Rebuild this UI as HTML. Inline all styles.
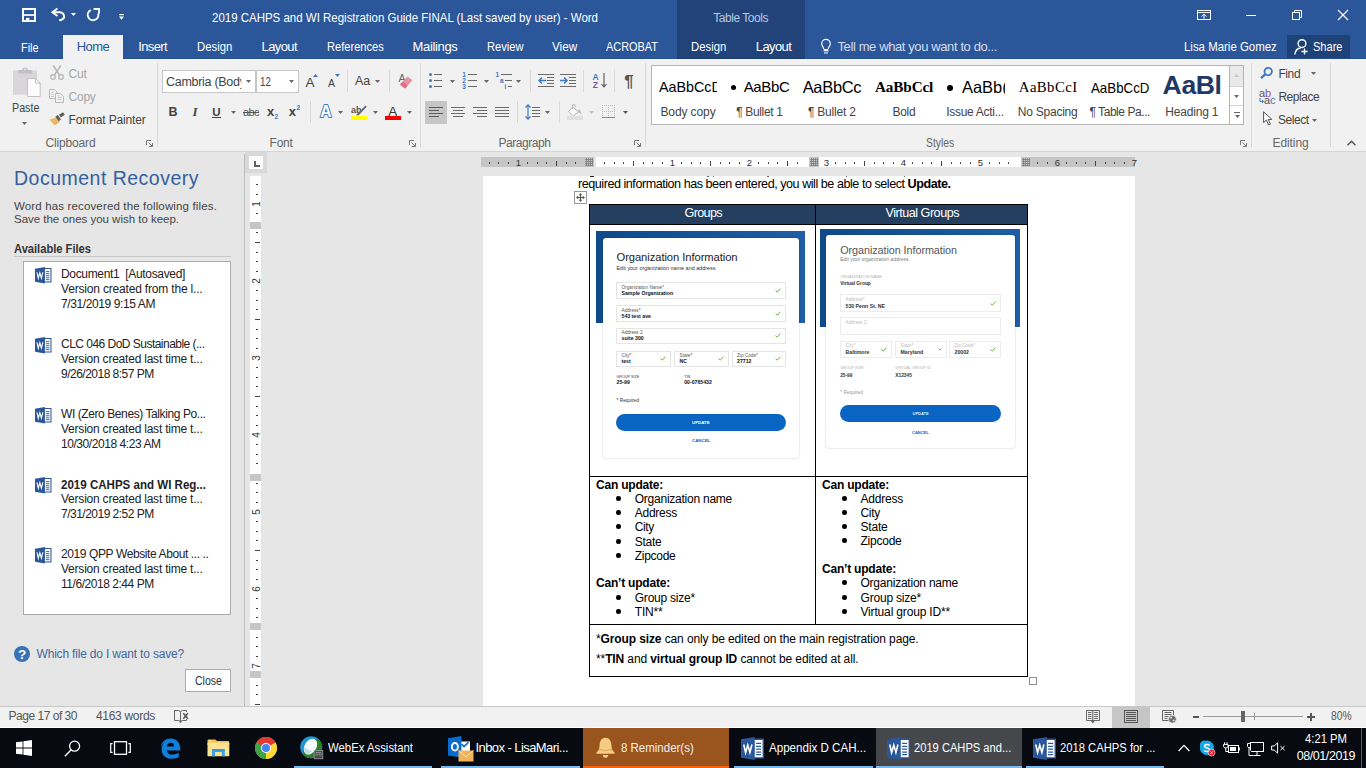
<!DOCTYPE html>
<html lang="en">
<head>
<meta charset="utf-8">
<title>2019 CAHPS and WI Registration Guide FINAL (Last saved by user) - Word</title>
<style>
*{box-sizing:border-box;margin:0;padding:0}
html,body{width:1366px;height:768px;overflow:hidden;background:#e6e6e6;font-family:"Liberation Sans",sans-serif;font-size:12px;color:#444}
.a{position:absolute;white-space:nowrap}
svg{overflow:visible}
</style>
</head>
<body>
<!-- s_title -->
<div class="a " style="left:0px;top:0px;width:1366px;height:59px;background:#2b579a;"></div>
<div class="a " style="left:677px;top:0px;width:128px;height:59px;background:#224379;"></div>
<div class="a " style="left:0px;top:58px;width:1366px;height:1px;background:#24508f;"></div>
<div class="a " style="left:677px;top:58px;width:128px;height:1px;background:#1d3c6e;"></div>
<div class="a " style="left:63px;top:35px;width:60px;height:25px;background:#f1f1f1;"></div>
<svg class="a" style="left:22px;top:8px;" width="14" height="14" viewBox="0 0 14 14"><rect x="1" y="1" width="12" height="12" fill="none" stroke="#fff" stroke-width="2"/><rect x="1" y="6.2" width="12" height="1.7" fill="#fff"/><rect x="4" y="9.9" width="3.4" height="3.9" fill="#fff"/></svg>
<svg class="a" style="left:51px;top:8px;" width="15" height="13" viewBox="0 0 15 13"><path d="M2 4.3H8.6C13.2 4.3 14.6 9.6 11.2 11.4C10.2 12 9.2 12.2 8.2 12.3" fill="none" stroke="#fff" stroke-width="1.9"/><path d="M6.4 0.6L1.4 4.3L6.4 8" fill="none" stroke="#fff" stroke-width="1.9"/></svg>
<svg class="a" style="left:71px;top:13px;" width="5" height="3" viewBox="0 0 5 3"><path d="M0 0H5L2.5 2.9Z" fill="#fff"/></svg>
<svg class="a" style="left:86px;top:8px;" width="14" height="13" viewBox="0 0 14 13"><path d="M4.8 2.1A5.3 5.3 0 1 0 12.2 5.6" fill="none" stroke="#fff" stroke-width="1.9"/><path d="M7.6 1H13V5.8" fill="none" stroke="#fff" stroke-width="1.8"/></svg>
<svg class="a" style="left:119px;top:14px;" width="5" height="6" viewBox="0 0 5 6"><rect x="0" y="0" width="5" height="1.2" fill="#fff"/><path d="M0 2.6H5L2.5 5.8Z" fill="#fff"/></svg>
<span class="a" id="t1" style="left:212.00px;top:11.00px;font-size:13px;line-height:13px;color:#fff;transform:scaleX(0.8830);transform-origin:0 0;">2019 CAHPS and WI Registration Guide FINAL (Last saved by user) - Word</span>
<span class="a" id="t2" style="left:713.25px;top:12.00px;font-size:12px;line-height:12px;color:#b9c7e0;letter-spacing:-0.462px;">Table Tools</span>
<svg class="a" style="left:1197px;top:10px;" width="14" height="10" viewBox="0 0 14 10"><rect x="0.5" y="0.5" width="13" height="9" fill="none" stroke="#fff" stroke-width="1"/><path d="M0.5 2.5H13.5" stroke="#fff" stroke-width="1"/><path d="M7 8.8V4.2M4.6 6.6L7 4.2L9.4 6.6" fill="none" stroke="#fff" stroke-width="1"/></svg>
<div class="a " style="left:1246px;top:15px;width:10px;height:1px;background:#fff;"></div>
<svg class="a" style="left:1292px;top:10px;" width="10" height="10" viewBox="0 0 10 10"><rect x="0.5" y="2.5" width="7" height="7" fill="none" stroke="#fff" stroke-width="1"/><path d="M2.5 2.5V0.5H9.5V7.5H7.5" fill="none" stroke="#fff" stroke-width="1"/></svg>
<svg class="a" style="left:1338px;top:10px;" width="10" height="10" viewBox="0 0 10 10"><path d="M0 0L10 10M10 0L0 10" stroke="#fff" stroke-width="1.1"/></svg>
<span class="a" id="t3" style="left:20.50px;top:41.00px;font-size:13px;line-height:13px;color:#fff;transform:scaleX(0.8352);transform-origin:0 0;">File</span>
<span class="a" id="t4" style="left:138.25px;top:40.00px;font-size:13px;line-height:13px;color:#fff;letter-spacing:-0.628px;">Insert</span>
<span class="a" id="t5" style="left:196.75px;top:40.00px;font-size:13px;line-height:13px;color:#fff;transform:scaleX(0.8710);transform-origin:0 0;">Design</span>
<span class="a" id="t6" style="left:261.50px;top:40.00px;font-size:13px;line-height:13px;color:#fff;letter-spacing:-0.591px;">Layout</span>
<span class="a" id="t7" style="left:326.50px;top:40.00px;font-size:13px;line-height:13px;color:#fff;transform:scaleX(0.8536);transform-origin:0 0;">References</span>
<span class="a" id="t8" style="left:412.50px;top:40.00px;font-size:13px;line-height:13px;color:#fff;letter-spacing:-0.336px;">Mailings</span>
<span class="a" id="t9" style="left:486.75px;top:40.00px;font-size:13px;line-height:13px;color:#fff;transform:scaleX(0.8563);transform-origin:0 0;">Review</span>
<span class="a" id="t10" style="left:552.00px;top:40.00px;font-size:13px;line-height:13px;color:#fff;transform:scaleX(0.9033);transform-origin:0 0;">View</span>
<span class="a" id="t11" style="left:606.25px;top:40.00px;font-size:13px;line-height:13px;color:#fff;transform:scaleX(0.8402);transform-origin:0 0;">ACROBAT</span>
<span class="a" id="t12" style="left:690.75px;top:40.00px;font-size:13px;line-height:13px;color:#fff;transform:scaleX(0.8710);transform-origin:0 0;">Design</span>
<span class="a" id="t13" style="left:755.75px;top:40.00px;font-size:13px;line-height:13px;color:#fff;letter-spacing:-0.591px;">Layout</span>
<span class="a" id="t14" style="left:76.75px;top:40.00px;font-size:13px;line-height:13px;color:#2b579a;letter-spacing:-0.547px;">Home</span>
<svg class="a" style="left:820.5px;top:38.6px;" width="10" height="15" viewBox="0 0 10 15"><path d="M2.7 10C2.7 8 0.7 7.2 0.7 4.7A4.3 4.3 0 0 1 9.3 4.7C9.3 7.2 7.3 8 7.3 10" fill="none" stroke="#eef2f9" stroke-width="1.25"/><rect x="2.6" y="10" width="4.8" height="2.3" fill="#eef2f9"/><rect x="3" y="13.4" width="4" height="1.1" fill="#eef2f9"/></svg>
<span class="a" id="t15" style="left:837.50px;top:40.00px;font-size:13px;line-height:13px;color:#d3ddef;letter-spacing:-0.392px;">Tell me what you want to do...</span>
<span class="a" id="t16" style="left:1184.00px;top:40.00px;font-size:13px;line-height:13px;color:#fff;transform:scaleX(0.8798);transform-origin:0 0;">Lisa Marie Gomez</span>
<div class="a " style="left:1287px;top:35px;width:63px;height:23px;background:#1e4278;"></div>
<svg class="a" style="left:1294px;top:39px;" width="15" height="17" viewBox="0 0 15 17"><circle cx="8" cy="4.6" r="3.9" fill="none" stroke="#fff" stroke-width="1.4"/><path d="M0.8 15.5C1.4 11 4 9.2 6.6 9" fill="none" stroke="#fff" stroke-width="1.4"/><path d="M10.5 9.5V15.5M7.5 12.5H13.5" stroke="#fff" stroke-width="1.3"/></svg>
<span class="a" id="t17" style="left:1313.00px;top:40.00px;font-size:13px;line-height:13px;color:#fff;transform:scaleX(0.8501);transform-origin:0 0;">Share</span>
<!-- s_ribbon -->
<div class="a " style="left:0px;top:59px;width:1366px;height:92px;background:#f1f1f1;"></div>
<div class="a " style="left:63px;top:58px;width:60px;height:2px;background:#f1f1f1;"></div>
<div class="a " style="left:0px;top:151px;width:1366px;height:1px;background:#d6d6d6;"></div>
<svg class="a" style="left:13px;top:67px;" width="28" height="30" viewBox="0 0 28 30"><rect x="0" y="3.4" width="24" height="24.4" fill="#d9d5db"/><path d="M5 6.6V4Q5 3 6 3H9.2V1.8Q12 -0.8 14.8 1.8V3H18Q19 3 19 4V6.6Z" fill="#c3bfc6"/><circle cx="12" cy="2.4" r="1.1" fill="#e4e1e6"/><path d="M14.5 11.5H22.5L27.2 16.2V29.5H14.5Z" fill="#fbfbfb" stroke="#c3c0c6" stroke-width="1"/><path d="M22.5 11.5V16.2H27.2" fill="none" stroke="#c3c0c6" stroke-width="1"/></svg>
<span class="a" id="t18" style="left:11.60px;top:102.00px;font-size:12px;line-height:12px;color:#444;transform:scaleX(0.8929);transform-origin:0 0;">Paste</span>
<svg class="a" style="left:22px;top:122px;" width="5" height="3" viewBox="0 0 5 3"><path d="M0 0H5L2.5 3Z" fill="#666"/></svg>
<svg class="a" style="left:50px;top:65px;" width="14" height="15" viewBox="0 0 14 15"><path d="M3.2 0.5L9.6 10.2M10.8 0.5L4.4 10.2" stroke="#b4b4b4" stroke-width="1.4" fill="none"/><circle cx="3" cy="12" r="2.3" fill="none" stroke="#b4b4b4" stroke-width="1.2"/><circle cx="11" cy="12" r="2.3" fill="none" stroke="#b4b4b4" stroke-width="1.2"/></svg>
<span class="a" id="t19" style="left:68.50px;top:68.00px;font-size:12px;line-height:12px;color:#a6a6a6;letter-spacing:-0.196px;">Cut</span>
<svg class="a" style="left:49px;top:89px;" width="15" height="14" viewBox="0 0 15 14"><path d="M0.5 0.5H5.5L8 3V9.5H0.5Z" fill="#f4f4f4" stroke="#b8b8b8"/><path d="M6.5 4.5H11.5L14.5 7.5V13.5H6.5Z" fill="#f4f4f4" stroke="#b8b8b8"/><path d="M2 3.5H4.5M2 5.5H5M2 7.5H5M8.5 8.5H12.5M8.5 10.5H12.5M8.5 6.8H10.5" stroke="#c2c2c2" stroke-width="0.9"/></svg>
<span class="a" id="t20" style="left:68.50px;top:91.00px;font-size:12px;line-height:12px;color:#a6a6a6;letter-spacing:-0.229px;">Copy</span>
<svg class="a" style="left:49px;top:112px;" width="16" height="14" viewBox="0 0 16 14"><path d="M0.5 7.8L7.2 5.2L10.6 10L5.6 13.4Z" fill="#eab765"/><path d="M6.4 4.6L8.8 2.9L12 7.6L9.6 9.2Z" fill="#5e5e5e"/><path d="M10 2.8L14 0.2L15.8 2.8L11.8 5.4Z" fill="#5e5e5e"/></svg>
<span class="a" id="t21" style="left:68.50px;top:114.00px;font-size:12px;line-height:12px;color:#444;letter-spacing:-0.161px;">Format Painter</span>
<span class="a" id="t22" style="left:45.60px;top:137.00px;font-size:12px;line-height:12px;color:#666;letter-spacing:-0.175px;">Clipboard</span>
<svg class="a" style="left:146px;top:140px;" width="7" height="7" viewBox="0 0 7 7"><path d="M0.5 5V0.5H5" fill="none" stroke="#777" stroke-width="1"/><path d="M2.6 2.6L6 6M6.5 3V6.5H3" fill="none" stroke="#777" stroke-width="1"/></svg>
<div class="a " style="left:157px;top:63px;width:1px;height:84px;background:#d8d8d8;"></div>
<div class="a " style="left:162px;top:70px;width:94px;height:23px;background:#fff;border:1px solid #c6c6c6;"></div>
<div class="a " style="left:256px;top:70px;width:43px;height:23px;background:#fff;border:1px solid #c6c6c6;"></div>
<span class="a" id="t23" style="left:166.00px;top:76.00px;font-size:12.5px;line-height:12.5px;color:#444;clip-path:inset(-2px 8.3px -4px 0);letter-spacing:-0.288px;">Cambria (Body)</span>
<svg class="a" style="left:246px;top:80px;" width="5" height="3" viewBox="0 0 5 3"><path d="M0 0H5L2.5 3Z" fill="#666"/></svg>
<span class="a" id="t24" style="left:259.75px;top:76.00px;font-size:12.5px;line-height:12.5px;color:#444;transform:scaleX(0.7802);transform-origin:0 0;">12</span>
<svg class="a" style="left:289px;top:80px;" width="5" height="3" viewBox="0 0 5 3"><path d="M0 0H5L2.5 3Z" fill="#666"/></svg>
<span class="a" id="t25" style="left:305.40px;top:76.00px;font-size:13.5px;line-height:13.5px;color:#444;">A</span>
<svg class="a" style="left:313px;top:74px;" width="5" height="3" viewBox="0 0 5 3"><path d="M0 3H5L2.5 0Z" fill="#3e78c3"/></svg>
<span class="a" id="t26" style="left:328.00px;top:78.00px;font-size:10.5px;line-height:10.5px;color:#444;">A</span>
<svg class="a" style="left:335px;top:74px;" width="5" height="3" viewBox="0 0 5 3"><path d="M0 0H5L2.5 3Z" fill="#3e78c3"/></svg>
<div class="a " style="left:347px;top:70px;width:1px;height:22px;background:#d8d8d8;"></div>
<span class="a" id="t27" style="left:355.00px;top:75.00px;font-size:12.5px;line-height:12.5px;color:#444;letter-spacing:-0.148px;">Aa</span>
<svg class="a" style="left:375px;top:80px;" width="5" height="3" viewBox="0 0 5 3"><path d="M0 0H5L2.5 3Z" fill="#666"/></svg>
<div class="a " style="left:389px;top:70px;width:1px;height:22px;background:#d8d8d8;"></div>
<span class="a" id="t28" style="left:398.50px;top:73.00px;font-size:10.5px;line-height:10.5px;color:#666;">A</span>
<svg class="a" style="left:399px;top:76px;" width="15" height="13" viewBox="0 0 15 13"><path d="M1 8.5L8.5 0.5L13.5 4.3L6 12.5Z" fill="#e8919f"/><path d="M1 8.5L3.5 5.8L8.6 9.7L6 12.5Z" fill="#df6d80"/></svg>
<span class="a" id="t29" style="left:168.50px;top:106.00px;font-size:12.5px;line-height:12.5px;color:#444;font-weight:bold;">B</span>
<span class="a" id="t30" style="left:192.50px;top:105.00px;font-size:13px;line-height:13px;color:#444;font-weight:bold;font-style:italic;font-family:'Liberation Serif',serif;">I</span>
<span class="a" id="t31" style="left:212.30px;top:107.00px;font-size:11.5px;line-height:11.5px;color:#444;font-weight:bold;">U</span>
<div class="a " style="left:212px;top:117px;width:9px;height:1px;background:#444;"></div>
<svg class="a" style="left:231px;top:111px;" width="5" height="3" viewBox="0 0 5 3"><path d="M0 0H5L2.5 3Z" fill="#666"/></svg>
<span class="a" id="t32" style="left:243.00px;top:107.00px;font-size:11px;line-height:11px;color:#555;text-decoration:line-through;letter-spacing:-0.583px;">abc</span>
<span class="a" id="t33" style="left:267.00px;top:105.00px;font-size:13px;line-height:13px;color:#444;font-weight:bold;">x</span>
<span class="a" id="t34" style="left:274.50px;top:114.00px;font-size:6.5px;line-height:6.5px;color:#3e78c3;font-weight:bold;">2</span>
<span class="a" id="t35" style="left:288.75px;top:105.00px;font-size:13px;line-height:13px;color:#444;font-weight:bold;">x</span>
<span class="a" id="t36" style="left:296.50px;top:105.00px;font-size:6.5px;line-height:6.5px;color:#3e78c3;font-weight:bold;">2</span>
<div class="a " style="left:310px;top:101px;width:1px;height:22px;background:#d8d8d8;"></div>
<svg class="a" style="left:319px;top:104px;" width="14" height="14" viewBox="0 0 14 14"><text x="7" y="12.8" font-size="15.6" font-weight="bold" font-family="Liberation Sans, sans-serif" text-anchor="middle" fill="#fff" stroke="#3e78c3" stroke-width="2" paint-order="stroke" stroke-linejoin="round">A</text></svg>
<svg class="a" style="left:338px;top:111px;" width="5" height="3" viewBox="0 0 5 3"><path d="M0 0H5L2.5 3Z" fill="#666"/></svg>
<span class="a" id="t37" style="left:351.00px;top:106.00px;font-size:9px;line-height:9px;color:#555;font-weight:bold;">ab</span>
<svg class="a" style="left:355px;top:105px;" width="12" height="11" viewBox="0 0 12 11"><path d="M1 10L10.5 0.5L11.8 1.8L3.5 10.5Z" fill="#6a6a6a"/></svg>
<div class="a " style="left:351px;top:116px;width:16px;height:4px;background:#ffff00;"></div>
<svg class="a" style="left:373px;top:111px;" width="5" height="3" viewBox="0 0 5 3"><path d="M0 0H5L2.5 3Z" fill="#666"/></svg>
<span class="a" id="t38" style="left:388.30px;top:105.00px;font-size:13.5px;line-height:13.5px;color:#3a3a3a;">A</span>
<div class="a " style="left:385px;top:116px;width:16px;height:4px;background:#ff0000;"></div>
<svg class="a" style="left:407px;top:111px;" width="5" height="3" viewBox="0 0 5 3"><path d="M0 0H5L2.5 3Z" fill="#666"/></svg>
<span class="a" id="t39" style="left:269.60px;top:137.00px;font-size:12px;line-height:12px;color:#666;letter-spacing:-0.279px;">Font</span>
<svg class="a" style="left:409px;top:140px;" width="7" height="7" viewBox="0 0 7 7"><path d="M0.5 5V0.5H5" fill="none" stroke="#777" stroke-width="1"/><path d="M2.6 2.6L6 6M6.5 3V6.5H3" fill="none" stroke="#777" stroke-width="1"/></svg>
<div class="a " style="left:420px;top:63px;width:1px;height:84px;background:#d8d8d8;"></div>
<div class="a " style="left:429px;top:73.0px;width:3px;height:3px;background:#3e78c3;border-radius:50%;"></div>
<div class="a " style="left:434px;top:74px;width:8px;height:1px;background:#6a6a6a;"></div>
<div class="a " style="left:429px;top:79.0px;width:3px;height:3px;background:#3e78c3;border-radius:50%;"></div>
<div class="a " style="left:434px;top:80px;width:8px;height:1px;background:#6a6a6a;"></div>
<div class="a " style="left:429px;top:85.0px;width:3px;height:3px;background:#3e78c3;border-radius:50%;"></div>
<div class="a " style="left:434px;top:86px;width:8px;height:1px;background:#6a6a6a;"></div>
<svg class="a" style="left:450px;top:80px;" width="5" height="3" viewBox="0 0 5 3"><path d="M0 0H5L2.5 3Z" fill="#666"/></svg>
<span class="a" id="t40" style="left:462.30px;top:72.00px;font-size:6.5px;line-height:6.5px;color:#3e78c3;font-weight:bold;">1</span>
<div class="a " style="left:468px;top:74px;width:9px;height:1px;background:#6a6a6a;"></div>
<span class="a" id="t41" style="left:462.30px;top:78.00px;font-size:6.5px;line-height:6.5px;color:#3e78c3;font-weight:bold;">2</span>
<div class="a " style="left:468px;top:80px;width:9px;height:1px;background:#6a6a6a;"></div>
<span class="a" id="t42" style="left:462.30px;top:84.00px;font-size:6.5px;line-height:6.5px;color:#3e78c3;font-weight:bold;">3</span>
<div class="a " style="left:468px;top:86px;width:9px;height:1px;background:#6a6a6a;"></div>
<svg class="a" style="left:484px;top:80px;" width="5" height="3" viewBox="0 0 5 3"><path d="M0 0H5L2.5 3Z" fill="#666"/></svg>
<span class="a" id="t43" style="left:495.60px;top:72.00px;font-size:6.5px;line-height:6.5px;color:#3e78c3;font-weight:bold;">1</span>
<div class="a " style="left:501px;top:74px;width:11px;height:1px;background:#6a6a6a;"></div>
<span class="a" id="t44" style="left:500.00px;top:78.00px;font-size:6.5px;line-height:6.5px;color:#3e78c3;font-weight:bold;">a</span>
<div class="a " style="left:505px;top:80px;width:7px;height:1px;background:#6a6a6a;"></div>
<span class="a" id="t45" style="left:504.50px;top:84.00px;font-size:6.5px;line-height:6.5px;color:#3e78c3;font-weight:bold;">i</span>
<div class="a " style="left:508px;top:86px;width:4px;height:1px;background:#6a6a6a;"></div>
<svg class="a" style="left:516px;top:80px;" width="5" height="3" viewBox="0 0 5 3"><path d="M0 0H5L2.5 3Z" fill="#666"/></svg>
<div class="a " style="left:530px;top:70px;width:1px;height:22px;background:#d8d8d8;"></div>
<div class="a " style="left:538px;top:74px;width:16px;height:1px;background:#6a6a6a;"></div>
<div class="a " style="left:547px;top:77px;width:7px;height:1px;background:#6a6a6a;"></div>
<div class="a " style="left:547px;top:80px;width:7px;height:1px;background:#6a6a6a;"></div>
<div class="a " style="left:547px;top:83px;width:7px;height:1px;background:#6a6a6a;"></div>
<div class="a " style="left:538px;top:86px;width:16px;height:1px;background:#6a6a6a;"></div>
<svg class="a" style="left:538px;top:77px;" width="8" height="7" viewBox="0 0 8 7"><path d="M8 3.5H1.5M4 0.5L1 3.5L4 6.5" fill="none" stroke="#3e78c3" stroke-width="1.5"/></svg>
<div class="a " style="left:560px;top:74px;width:16px;height:1px;background:#6a6a6a;"></div>
<div class="a " style="left:569px;top:77px;width:7px;height:1px;background:#6a6a6a;"></div>
<div class="a " style="left:569px;top:80px;width:7px;height:1px;background:#6a6a6a;"></div>
<div class="a " style="left:569px;top:83px;width:7px;height:1px;background:#6a6a6a;"></div>
<div class="a " style="left:560px;top:86px;width:16px;height:1px;background:#6a6a6a;"></div>
<svg class="a" style="left:560px;top:77px;" width="8" height="7" viewBox="0 0 8 7"><path d="M0 3.5H6.5M4 0.5L7 3.5L4 6.5" fill="none" stroke="#3e78c3" stroke-width="1.5"/></svg>
<div class="a " style="left:583px;top:70px;width:1px;height:22px;background:#d8d8d8;"></div>
<span class="a" id="t46" style="left:592.50px;top:73.00px;font-size:8.5px;line-height:8.5px;color:#3e78c3;font-weight:bold;">A</span>
<span class="a" id="t47" style="left:592.80px;top:81.00px;font-size:8.5px;line-height:8.5px;color:#8b4fa8;font-weight:bold;">Z</span>
<svg class="a" style="left:601px;top:73px;" width="6" height="15" viewBox="0 0 6 15"><path d="M3 0V14M0.5 11L3 14L5.5 11" fill="none" stroke="#555" stroke-width="1.1"/></svg>
<div class="a " style="left:614px;top:70px;width:1px;height:22px;background:#d8d8d8;"></div>
<span class="a" id="t48" style="left:624.30px;top:73.00px;font-size:16.5px;line-height:16.5px;color:#555;font-weight:bold;">¶</span>
<div class="a " style="left:425px;top:101px;width:22px;height:23px;background:#c6c6c6;"></div>
<div class="a " style="left:429px;top:107px;width:14px;height:1px;background:#5a5a5a;"></div>
<div class="a " style="left:451px;top:107px;width:14px;height:1px;background:#6a6a6a;"></div>
<div class="a " style="left:473px;top:107px;width:14px;height:1px;background:#6a6a6a;"></div>
<div class="a " style="left:495px;top:107px;width:14px;height:1px;background:#6a6a6a;"></div>
<div class="a " style="left:429px;top:110px;width:10px;height:1px;background:#5a5a5a;"></div>
<div class="a " style="left:453px;top:110px;width:10px;height:1px;background:#6a6a6a;"></div>
<div class="a " style="left:477px;top:110px;width:10px;height:1px;background:#6a6a6a;"></div>
<div class="a " style="left:495px;top:110px;width:14px;height:1px;background:#6a6a6a;"></div>
<div class="a " style="left:429px;top:113px;width:14px;height:1px;background:#5a5a5a;"></div>
<div class="a " style="left:451px;top:113px;width:14px;height:1px;background:#6a6a6a;"></div>
<div class="a " style="left:473px;top:113px;width:14px;height:1px;background:#6a6a6a;"></div>
<div class="a " style="left:495px;top:113px;width:14px;height:1px;background:#6a6a6a;"></div>
<div class="a " style="left:429px;top:116px;width:10px;height:1px;background:#5a5a5a;"></div>
<div class="a " style="left:453px;top:116px;width:10px;height:1px;background:#6a6a6a;"></div>
<div class="a " style="left:477px;top:116px;width:10px;height:1px;background:#6a6a6a;"></div>
<div class="a " style="left:495px;top:116px;width:14px;height:1px;background:#6a6a6a;"></div>
<div class="a " style="left:517px;top:101px;width:1px;height:22px;background:#d8d8d8;"></div>
<svg class="a" style="left:525px;top:104px;" width="6" height="16" viewBox="0 0 6 16"><path d="M3 1V15M0.5 3.5L3 0.8L5.5 3.5M0.5 12.5L3 15.2L5.5 12.5" fill="none" stroke="#3e78c3" stroke-width="1.2"/></svg>
<div class="a " style="left:532px;top:107px;width:8px;height:1px;background:#6a6a6a;"></div>
<div class="a " style="left:532px;top:110px;width:8px;height:1px;background:#6a6a6a;"></div>
<div class="a " style="left:532px;top:113px;width:8px;height:1px;background:#6a6a6a;"></div>
<div class="a " style="left:532px;top:116px;width:8px;height:1px;background:#6a6a6a;"></div>
<svg class="a" style="left:545px;top:111px;" width="5" height="3" viewBox="0 0 5 3"><path d="M0 0H5L2.5 3Z" fill="#666"/></svg>
<div class="a " style="left:559px;top:101px;width:1px;height:22px;background:#d8d8d8;"></div>
<svg class="a" style="left:567px;top:104px;" width="16" height="13" viewBox="0 0 16 13"><path d="M5.5 3.2L11.5 7.8L6.5 12L1.5 7.6Z" fill="#fafafa" stroke="#b9b9b9" stroke-width="1"/><path d="M5.5 5V0.8H8V3.5" fill="none" stroke="#b9b9b9" stroke-width="1"/><path d="M11.5 5.2C14 6.5 14.6 8.5 14 10.5C13 9 12.5 8.6 11.2 8Z" fill="#b9b9b9"/></svg>
<div class="a " style="left:567px;top:116px;width:16px;height:4px;background:#e4dde5;"></div>
<svg class="a" style="left:589px;top:111px;" width="5" height="3" viewBox="0 0 5 3"><path d="M0 0H5L2.5 3Z" fill="#c4c4c4"/></svg>
<svg class="a" style="left:602px;top:105px;" width="13" height="13" viewBox="0 0 13 13"><path d="M0 0.5H13M0 6.5H13M0.5 0V12M6.5 0V12M12.5 0V12" fill="none" stroke="#d8a9c0" stroke-width="1" stroke-dasharray="1 1"/><path d="M0 12.5H13" stroke="#8a8a8a" stroke-width="1"/></svg>
<svg class="a" style="left:622.5px;top:111px;" width="5" height="3" viewBox="0 0 5 3"><path d="M0 0H5L2.5 3Z" fill="#555"/></svg>
<span class="a" id="t49" style="left:498.50px;top:137.00px;font-size:12px;line-height:12px;color:#666;letter-spacing:-0.461px;">Paragraph</span>
<svg class="a" style="left:634px;top:140px;" width="7" height="7" viewBox="0 0 7 7"><path d="M0.5 5V0.5H5" fill="none" stroke="#777" stroke-width="1"/><path d="M2.6 2.6L6 6M6.5 3V6.5H3" fill="none" stroke="#777" stroke-width="1"/></svg>
<div class="a " style="left:645px;top:63px;width:1px;height:84px;background:#d8d8d8;"></div>
<div class="a " style="left:651px;top:65px;width:593px;height:60px;background:#fff;border:1px solid #b5b5b5;"></div>
<span class="a" id="t50" style="left:659.00px;top:80.00px;font-size:14.3px;line-height:14.3px;color:#000;width:58px;overflow:hidden;">AaBbCcD</span>
<span class="a" id="t51" style="left:660.40px;top:106.00px;font-size:12px;line-height:12px;color:#444;letter-spacing:-0.094px;">Body copy</span>
<div class="a " style="left:730.6px;top:85.4px;width:5px;height:5px;background:#000;border-radius:50%;"></div>
<span class="a" id="t52" style="left:743.70px;top:79.00px;font-size:15px;line-height:15px;color:#000;letter-spacing:-0.346px;">AaBbC</span>
<span class="a" id="t53" style="left:736.25px;top:106.00px;font-size:12px;line-height:12px;color:#444;letter-spacing:-0.356px;">¶ Bullet 1</span>
<span class="a" id="t54" style="left:802.70px;top:79.00px;font-size:16.5px;line-height:16.5px;color:#000;letter-spacing:-0.322px;">AaBbCc</span>
<span class="a" id="t55" style="left:808.00px;top:106.00px;font-size:12px;line-height:12px;color:#444;letter-spacing:-0.221px;">¶ Bullet 2</span>
<span class="a" id="t56" style="left:875.00px;top:79.00px;font-size:15.2px;line-height:15.2px;color:#000;font-weight:bold;font-family:'Liberation Serif',serif;letter-spacing:-0.125px;">AaBbCcl</span>
<span class="a" id="t57" style="left:892.50px;top:106.00px;font-size:12px;line-height:12px;color:#444;letter-spacing:-0.283px;">Bold</span>
<div class="a " style="left:946.8px;top:84.6px;width:6.5px;height:6.5px;background:#000;border-radius:50%;"></div>
<span class="a" id="t58" style="left:961.90px;top:79.00px;font-size:16.5px;line-height:16.5px;color:#000;width:43px;overflow:hidden;">AaBb(</span>
<span class="a" id="t59" style="left:946.25px;top:106.00px;font-size:12px;line-height:12px;color:#444;letter-spacing:-0.297px;">Issue Acti...</span>
<span class="a" id="t60" style="left:1018.80px;top:80.00px;font-size:14.8px;line-height:14.8px;color:#000;font-family:'Liberation Serif',serif;letter-spacing:0.401px;">AaBbCcI</span>
<span class="a" id="t61" style="left:1017.75px;top:106.00px;font-size:12px;line-height:12px;color:#444;letter-spacing:-0.230px;">No Spacing</span>
<span class="a" id="t62" style="left:1090.80px;top:81.00px;font-size:14.4px;line-height:14.4px;color:#000;transform:scaleX(0.9242);transform-origin:0 0;">AaBbCcD</span>
<span class="a" id="t63" style="left:1089.40px;top:106.00px;font-size:12px;line-height:12px;color:#444;letter-spacing:-0.436px;">¶ Table Pa...</span>
<span class="a" id="t64" style="left:1162.60px;top:72.00px;font-size:26.6px;line-height:26.6px;color:#1f3864;font-weight:bold;letter-spacing:-0.398px;">AaBl</span>
<span class="a" id="t65" style="left:1165.30px;top:106.00px;font-size:12px;line-height:12px;color:#444;letter-spacing:-0.191px;">Heading 1</span>
<div class="a " style="left:1229px;top:65px;width:15px;height:60px;background:#fff;border:1px solid #b5b5b5;"></div>
<div class="a " style="left:1230px;top:66px;width:13px;height:20px;background:#e9e9e9;"></div>
<div class="a " style="left:1230px;top:86px;width:13px;height:1px;background:#d2d2d2;"></div>
<div class="a " style="left:1230px;top:105px;width:13px;height:1px;background:#d2d2d2;"></div>
<svg class="a" style="left:1234px;top:74px;" width="5" height="3" viewBox="0 0 5 3"><path d="M0 3H5L2.5 0Z" fill="#c4c4c4"/></svg>
<svg class="a" style="left:1234px;top:95px;" width="5" height="3" viewBox="0 0 5 3"><path d="M0 0H5L2.5 3Z" fill="#666"/></svg>
<div class="a " style="left:1234px;top:111.5px;width:6px;height:1px;background:#666;"></div>
<svg class="a" style="left:1234.5px;top:114.5px;" width="5" height="3" viewBox="0 0 5 3"><path d="M0 0H5L2.5 3Z" fill="#666"/></svg>
<span class="a" id="t66" style="left:926.25px;top:137.00px;font-size:12px;line-height:12px;color:#666;transform:scaleX(0.8612);transform-origin:0 0;">Styles</span>
<svg class="a" style="left:1240px;top:140px;" width="7" height="7" viewBox="0 0 7 7"><path d="M0.5 5V0.5H5" fill="none" stroke="#777" stroke-width="1"/><path d="M2.6 2.6L6 6M6.5 3V6.5H3" fill="none" stroke="#777" stroke-width="1"/></svg>
<div class="a " style="left:1251px;top:63px;width:1px;height:84px;background:#d8d8d8;"></div>
<svg class="a" style="left:1260px;top:67px;" width="13" height="12" viewBox="0 0 13 12"><circle cx="8.2" cy="4.6" r="3.7" fill="none" stroke="#3e78c3" stroke-width="1.8"/><path d="M5.4 7.2L1 11.2" stroke="#3e78c3" stroke-width="2.3"/></svg>
<span class="a" id="t67" style="left:1278.40px;top:68.00px;font-size:12px;line-height:12px;color:#444;letter-spacing:-0.386px;">Find</span>
<svg class="a" style="left:1311px;top:72px;" width="5" height="3" viewBox="0 0 5 3"><path d="M0 0H5L2.5 3Z" fill="#666"/></svg>
<span class="a" id="t68" style="left:1259.00px;top:88.00px;font-size:11px;line-height:11px;color:#555;">a</span>
<span class="a" id="t69" style="left:1265.00px;top:88.00px;font-size:11px;line-height:11px;color:#8b4fa8;">b</span>
<span class="a" id="t70" style="left:1264.00px;top:95.00px;font-size:11px;line-height:11px;color:#555;">a</span>
<span class="a" id="t71" style="left:1270.00px;top:95.00px;font-size:11px;line-height:11px;color:#3e78c3;">c</span>
<svg class="a" style="left:1258.5px;top:98px;" width="5" height="6" viewBox="0 0 5 6"><path d="M1 0V3.5H4.5M3 1.8L4.7 3.5L3 5.2" fill="none" stroke="#3e78c3" stroke-width="1"/></svg>
<span class="a" id="t72" style="left:1278.40px;top:91.00px;font-size:12px;line-height:12px;color:#444;letter-spacing:-0.462px;">Replace</span>
<svg class="a" style="left:1263px;top:111px;" width="10" height="15" viewBox="0 0 10 15"><path d="M0.6 0.8V11.6L3.4 9L5.6 14L7.4 13.2L5.2 8.4H8.8Z" fill="#fff" stroke="#555" stroke-width="1"/></svg>
<span class="a" id="t73" style="left:1278.00px;top:114.00px;font-size:12px;line-height:12px;color:#444;letter-spacing:-0.460px;">Select</span>
<svg class="a" style="left:1312px;top:118.5px;" width="5" height="3" viewBox="0 0 5 3"><path d="M0 0H5L2.5 3Z" fill="#666"/></svg>
<span class="a" id="t74" style="left:1272.50px;top:137.00px;font-size:12px;line-height:12px;color:#666;letter-spacing:-0.086px;">Editing</span>
<div class="a " style="left:1330px;top:63px;width:1px;height:84px;background:#d8d8d8;"></div>
<svg class="a" style="left:1347px;top:140px;" width="9" height="6" viewBox="0 0 9 6"><path d="M0.5 5.2L4.5 1.2L8.5 5.2" fill="none" stroke="#555" stroke-width="1.5"/></svg>
<!-- s_left -->
<div class="a " style="left:244px;top:154px;width:1px;height:552px;background:#bdbdbd;"></div>
<span class="a" id="t75" style="left:14.00px;top:169.00px;font-size:19.5px;line-height:19.5px;color:#345f9f;letter-spacing:0.491px;">Document Recovery</span>
<span class="a" id="t76" style="left:14.00px;top:201.00px;font-size:11.5px;line-height:11.5px;color:#444;letter-spacing:0.146px;">Word has recovered the following files.</span>
<span class="a" id="t77" style="left:14.00px;top:214.00px;font-size:11.5px;line-height:11.5px;color:#444;letter-spacing:-0.019px;">Save the ones you wish to keep.</span>
<span class="a" id="t78" style="left:14.00px;top:242.00px;font-size:13px;line-height:13px;color:#333;font-weight:bold;transform:scaleX(0.8570);transform-origin:0 0;">Available Files</span>
<div class="a " style="left:14px;top:256px;width:217px;height:1px;background:#c8c8c8;"></div>
<div class="a " style="left:23px;top:261px;width:208px;height:354px;background:#fff;border:1px solid #ababab;"></div>
<svg class="a" style="left:34.5px;top:267px;" width="16.5" height="16.5" viewBox="0 0 16 16"><path d="M7 1.5H15.5V14.5H7Z" fill="#fff" stroke="#2b579a" stroke-width="1"/><path d="M10.5 4.5H14M10.5 6.5H14M10.5 8.5H14M10.5 10.5H14M10.5 12.3H14" stroke="#2b579a" stroke-width="0.9"/><path d="M0 1.6L9.6 0V16L0 14.4Z" fill="#2b579a"/><path d="M1.9 5.2L3.2 10.8L4.7 5.6L6.2 10.8L7.6 5.2" fill="none" stroke="#fff" stroke-width="1.1"/></svg>
<span class="a" id="t79" style="left:61.00px;top:268.00px;font-size:12px;line-height:12px;color:#222;letter-spacing:-0.337px;">Document1&nbsp; [Autosaved]</span>
<span class="a" id="t80" style="left:61.00px;top:283.00px;font-size:12px;line-height:12px;color:#222;letter-spacing:-0.181px;">Version created from the l...</span>
<span class="a" id="t81" style="left:61.00px;top:298.00px;font-size:12px;line-height:12px;color:#222;letter-spacing:-0.397px;">7/31/2019 9:15 AM</span>
<svg class="a" style="left:34.5px;top:337px;" width="16.5" height="16.5" viewBox="0 0 16 16"><path d="M7 1.5H15.5V14.5H7Z" fill="#fff" stroke="#2b579a" stroke-width="1"/><path d="M10.5 4.5H14M10.5 6.5H14M10.5 8.5H14M10.5 10.5H14M10.5 12.3H14" stroke="#2b579a" stroke-width="0.9"/><path d="M0 1.6L9.6 0V16L0 14.4Z" fill="#2b579a"/><path d="M1.9 5.2L3.2 10.8L4.7 5.6L6.2 10.8L7.6 5.2" fill="none" stroke="#fff" stroke-width="1.1"/></svg>
<span class="a" id="t82" style="left:61.00px;top:338.00px;font-size:12px;line-height:12px;color:#222;letter-spacing:-0.521px;">CLC 046 DoD Sustainable (...</span>
<span class="a" id="t83" style="left:61.00px;top:353.00px;font-size:12px;line-height:12px;color:#222;letter-spacing:-0.219px;">Version created last time t...</span>
<span class="a" id="t84" style="left:61.00px;top:368.00px;font-size:12px;line-height:12px;color:#222;letter-spacing:-0.510px;">9/26/2018 8:57 PM</span>
<svg class="a" style="left:34.5px;top:407px;" width="16.5" height="16.5" viewBox="0 0 16 16"><path d="M7 1.5H15.5V14.5H7Z" fill="#fff" stroke="#2b579a" stroke-width="1"/><path d="M10.5 4.5H14M10.5 6.5H14M10.5 8.5H14M10.5 10.5H14M10.5 12.3H14" stroke="#2b579a" stroke-width="0.9"/><path d="M0 1.6L9.6 0V16L0 14.4Z" fill="#2b579a"/><path d="M1.9 5.2L3.2 10.8L4.7 5.6L6.2 10.8L7.6 5.2" fill="none" stroke="#fff" stroke-width="1.1"/></svg>
<span class="a" id="t85" style="left:61.00px;top:408.00px;font-size:12px;line-height:12px;color:#222;letter-spacing:-0.414px;">WI (Zero Benes) Talking Po...</span>
<span class="a" id="t86" style="left:61.00px;top:423.00px;font-size:12px;line-height:12px;color:#222;letter-spacing:-0.219px;">Version created last time t...</span>
<span class="a" id="t87" style="left:61.00px;top:438.00px;font-size:12px;line-height:12px;color:#222;letter-spacing:-0.440px;">10/30/2018 4:23 AM</span>
<svg class="a" style="left:34.5px;top:477px;" width="16.5" height="16.5" viewBox="0 0 16 16"><path d="M7 1.5H15.5V14.5H7Z" fill="#fff" stroke="#2b579a" stroke-width="1"/><path d="M10.5 4.5H14M10.5 6.5H14M10.5 8.5H14M10.5 10.5H14M10.5 12.3H14" stroke="#2b579a" stroke-width="0.9"/><path d="M0 1.6L9.6 0V16L0 14.4Z" fill="#2b579a"/><path d="M1.9 5.2L3.2 10.8L4.7 5.6L6.2 10.8L7.6 5.2" fill="none" stroke="#fff" stroke-width="1.1"/></svg>
<span class="a" id="t88" style="left:61.00px;top:478.00px;font-size:13px;line-height:13px;color:#222;font-weight:bold;transform:scaleX(0.8881);transform-origin:0 0;">2019 CAHPS and WI Reg...</span>
<span class="a" id="t89" style="left:61.00px;top:493.00px;font-size:12px;line-height:12px;color:#222;letter-spacing:-0.219px;">Version created last time t...</span>
<span class="a" id="t90" style="left:61.00px;top:508.00px;font-size:12px;line-height:12px;color:#222;letter-spacing:-0.510px;">7/31/2019 2:52 PM</span>
<svg class="a" style="left:34.5px;top:547px;" width="16.5" height="16.5" viewBox="0 0 16 16"><path d="M7 1.5H15.5V14.5H7Z" fill="#fff" stroke="#2b579a" stroke-width="1"/><path d="M10.5 4.5H14M10.5 6.5H14M10.5 8.5H14M10.5 10.5H14M10.5 12.3H14" stroke="#2b579a" stroke-width="0.9"/><path d="M0 1.6L9.6 0V16L0 14.4Z" fill="#2b579a"/><path d="M1.9 5.2L3.2 10.8L4.7 5.6L6.2 10.8L7.6 5.2" fill="none" stroke="#fff" stroke-width="1.1"/></svg>
<span class="a" id="t91" style="left:61.00px;top:548.00px;font-size:12px;line-height:12px;color:#222;letter-spacing:-0.397px;">2019 QPP Website About ... ..</span>
<span class="a" id="t92" style="left:61.00px;top:563.00px;font-size:12px;line-height:12px;color:#222;letter-spacing:-0.219px;">Version created last time t...</span>
<span class="a" id="t93" style="left:61.00px;top:578.00px;font-size:12px;line-height:12px;color:#222;letter-spacing:-0.458px;">11/6/2018 2:44 PM</span>
<svg class="a" style="left:14px;top:646px;" width="16" height="16" viewBox="0 0 16 16"><circle cx="8" cy="8" r="8" fill="#3872b6"/><text x="8" y="12.6" font-size="13.5" font-weight="bold" font-family="Liberation Sans, sans-serif" text-anchor="middle" fill="#fff">?</text></svg>
<span class="a" id="t94" style="left:36.50px;top:648.00px;font-size:12px;line-height:12px;color:#3d68a4;letter-spacing:-0.181px;">Which file do I want to save?</span>
<div class="a " style="left:185px;top:669px;width:46px;height:23px;background:#fdfdfd;border:1px solid #ababab;"></div>
<span class="a" id="t95" style="left:194.50px;top:675.00px;font-size:12px;line-height:12px;color:#333;transform:scaleX(0.8798);transform-origin:0 0;">Close</span>
<!-- s_doc -->
<div class="a " style="left:245px;top:152px;width:22px;height:21px;background:#d9d9d9;"></div>
<div class="a " style="left:249px;top:156px;width:14px;height:13px;background:#fcfcfc;"></div>
<svg class="a" style="left:254px;top:161px;" width="6" height="6" viewBox="0 0 6 6"><path d="M1 0V5H6" fill="none" stroke="#5e5e5e" stroke-width="2"/></svg>
<div class="a " style="left:250px;top:176px;width:11px;height:530px;background:#fff;"></div>
<div class="a " style="left:250px;top:222px;width:11px;height:7px;background:#c6c6c6;"></div>
<div class="a " style="left:250px;top:474px;width:11px;height:7px;background:#c6c6c6;"></div>
<div class="a " style="left:250px;top:623px;width:11px;height:7px;background:#c6c6c6;"></div>
<div class="a " style="left:250px;top:671px;width:11px;height:7px;background:#c6c6c6;"></div>
<div class="a " style="left:256px;top:184px;width:2px;height:1px;background:#444;"></div>
<div class="a " style="left:256px;top:194px;width:2px;height:1px;background:#444;"></div>
<span class="a" style="left:251px;top:199px;width:12px;height:10px;font-size:10px;line-height:10px;color:#333;text-align:center;transform:rotate(-90deg);">1</span>
<div class="a " style="left:256px;top:213px;width:2px;height:1px;background:#444;"></div>
<div class="a " style="left:256px;top:232px;width:2px;height:1px;background:#444;"></div>
<div class="a " style="left:255px;top:242px;width:5px;height:1px;background:#444;"></div>
<div class="a " style="left:256px;top:252px;width:2px;height:1px;background:#444;"></div>
<div class="a " style="left:256px;top:261px;width:2px;height:1px;background:#444;"></div>
<div class="a " style="left:256px;top:271px;width:2px;height:1px;background:#444;"></div>
<span class="a" style="left:251px;top:276px;width:12px;height:10px;font-size:10px;line-height:10px;color:#333;text-align:center;transform:rotate(-90deg);">2</span>
<div class="a " style="left:256px;top:290px;width:2px;height:1px;background:#444;"></div>
<div class="a " style="left:256px;top:300px;width:2px;height:1px;background:#444;"></div>
<div class="a " style="left:256px;top:309px;width:2px;height:1px;background:#444;"></div>
<div class="a " style="left:255px;top:319px;width:5px;height:1px;background:#444;"></div>
<div class="a " style="left:256px;top:329px;width:2px;height:1px;background:#444;"></div>
<div class="a " style="left:256px;top:338px;width:2px;height:1px;background:#444;"></div>
<div class="a " style="left:256px;top:348px;width:2px;height:1px;background:#444;"></div>
<span class="a" style="left:251px;top:353px;width:12px;height:10px;font-size:10px;line-height:10px;color:#333;text-align:center;transform:rotate(-90deg);">3</span>
<div class="a " style="left:256px;top:367px;width:2px;height:1px;background:#444;"></div>
<div class="a " style="left:256px;top:377px;width:2px;height:1px;background:#444;"></div>
<div class="a " style="left:256px;top:386px;width:2px;height:1px;background:#444;"></div>
<div class="a " style="left:255px;top:396px;width:5px;height:1px;background:#444;"></div>
<div class="a " style="left:256px;top:406px;width:2px;height:1px;background:#444;"></div>
<div class="a " style="left:256px;top:415px;width:2px;height:1px;background:#444;"></div>
<div class="a " style="left:256px;top:425px;width:2px;height:1px;background:#444;"></div>
<span class="a" style="left:251px;top:430px;width:12px;height:10px;font-size:10px;line-height:10px;color:#333;text-align:center;transform:rotate(-90deg);">4</span>
<div class="a " style="left:256px;top:444px;width:2px;height:1px;background:#444;"></div>
<div class="a " style="left:256px;top:454px;width:2px;height:1px;background:#444;"></div>
<div class="a " style="left:256px;top:463px;width:2px;height:1px;background:#444;"></div>
<div class="a " style="left:256px;top:483px;width:2px;height:1px;background:#444;"></div>
<div class="a " style="left:256px;top:492px;width:2px;height:1px;background:#444;"></div>
<div class="a " style="left:256px;top:502px;width:2px;height:1px;background:#444;"></div>
<span class="a" style="left:251px;top:507px;width:12px;height:10px;font-size:10px;line-height:10px;color:#333;text-align:center;transform:rotate(-90deg);">5</span>
<div class="a " style="left:256px;top:521px;width:2px;height:1px;background:#444;"></div>
<div class="a " style="left:256px;top:531px;width:2px;height:1px;background:#444;"></div>
<div class="a " style="left:256px;top:540px;width:2px;height:1px;background:#444;"></div>
<div class="a " style="left:255px;top:550px;width:5px;height:1px;background:#444;"></div>
<div class="a " style="left:256px;top:560px;width:2px;height:1px;background:#444;"></div>
<div class="a " style="left:256px;top:569px;width:2px;height:1px;background:#444;"></div>
<div class="a " style="left:256px;top:579px;width:2px;height:1px;background:#444;"></div>
<span class="a" style="left:251px;top:584px;width:12px;height:10px;font-size:10px;line-height:10px;color:#333;text-align:center;transform:rotate(-90deg);">6</span>
<div class="a " style="left:256px;top:598px;width:2px;height:1px;background:#444;"></div>
<div class="a " style="left:256px;top:608px;width:2px;height:1px;background:#444;"></div>
<div class="a " style="left:256px;top:617px;width:2px;height:1px;background:#444;"></div>
<div class="a " style="left:256px;top:637px;width:2px;height:1px;background:#444;"></div>
<div class="a " style="left:256px;top:646px;width:2px;height:1px;background:#444;"></div>
<div class="a " style="left:256px;top:656px;width:2px;height:1px;background:#444;"></div>
<span class="a" style="left:251px;top:661px;width:12px;height:10px;font-size:10px;line-height:10px;color:#333;text-align:center;transform:rotate(-90deg);">7</span>
<div class="a " style="left:256px;top:685px;width:2px;height:1px;background:#444;"></div>
<div class="a " style="left:256px;top:694px;width:2px;height:1px;background:#444;"></div>
<div class="a " style="left:255px;top:704px;width:5px;height:1px;background:#444;"></div>
<div class="a " style="left:596px;top:157px;width:431px;height:10px;background:#fff;"></div>
<div class="a " style="left:481px;top:157px;width:113px;height:10px;background:#c6c6c6;"></div>
<div class="a " style="left:1021px;top:157px;width:114px;height:10px;background:#c6c6c6;"></div>
<div class="a " style="left:809px;top:157px;width:10px;height:10px;background:#c6c6c6;"></div>
<div class="a " style="left:489px;top:162px;width:1px;height:2px;background:#444;"></div>
<div class="a " style="left:498px;top:162px;width:1px;height:2px;background:#444;"></div>
<div class="a " style="left:508px;top:162px;width:1px;height:2px;background:#444;"></div>
<span class="a" style="left:512.5px;top:158px;width:12px;font-size:9.5px;line-height:10px;color:#333;text-align:center;">1</span>
<div class="a " style="left:527px;top:162px;width:1px;height:2px;background:#444;"></div>
<div class="a " style="left:537px;top:162px;width:1px;height:2px;background:#444;"></div>
<div class="a " style="left:546px;top:162px;width:1px;height:2px;background:#444;"></div>
<div class="a " style="left:556px;top:161px;width:1px;height:5px;background:#444;"></div>
<div class="a " style="left:566px;top:162px;width:1px;height:2px;background:#444;"></div>
<div class="a " style="left:575px;top:162px;width:1px;height:2px;background:#444;"></div>
<div class="a " style="left:604px;top:162px;width:1px;height:2px;background:#444;"></div>
<div class="a " style="left:614px;top:162px;width:1px;height:2px;background:#444;"></div>
<div class="a " style="left:623px;top:162px;width:1px;height:2px;background:#444;"></div>
<div class="a " style="left:633px;top:161px;width:1px;height:5px;background:#444;"></div>
<div class="a " style="left:643px;top:162px;width:1px;height:2px;background:#444;"></div>
<div class="a " style="left:652px;top:162px;width:1px;height:2px;background:#444;"></div>
<div class="a " style="left:662px;top:162px;width:1px;height:2px;background:#444;"></div>
<span class="a" style="left:666.5px;top:158px;width:12px;font-size:9.5px;line-height:10px;color:#333;text-align:center;">1</span>
<div class="a " style="left:681px;top:162px;width:1px;height:2px;background:#444;"></div>
<div class="a " style="left:691px;top:162px;width:1px;height:2px;background:#444;"></div>
<div class="a " style="left:700px;top:162px;width:1px;height:2px;background:#444;"></div>
<div class="a " style="left:710px;top:161px;width:1px;height:5px;background:#444;"></div>
<div class="a " style="left:720px;top:162px;width:1px;height:2px;background:#444;"></div>
<div class="a " style="left:729px;top:162px;width:1px;height:2px;background:#444;"></div>
<div class="a " style="left:739px;top:162px;width:1px;height:2px;background:#444;"></div>
<span class="a" style="left:743.5px;top:158px;width:12px;font-size:9.5px;line-height:10px;color:#333;text-align:center;">2</span>
<div class="a " style="left:758px;top:162px;width:1px;height:2px;background:#444;"></div>
<div class="a " style="left:768px;top:162px;width:1px;height:2px;background:#444;"></div>
<div class="a " style="left:777px;top:162px;width:1px;height:2px;background:#444;"></div>
<div class="a " style="left:787px;top:161px;width:1px;height:5px;background:#444;"></div>
<div class="a " style="left:797px;top:162px;width:1px;height:2px;background:#444;"></div>
<span class="a" style="left:820.5px;top:158px;width:12px;font-size:9.5px;line-height:10px;color:#333;text-align:center;">3</span>
<div class="a " style="left:835px;top:162px;width:1px;height:2px;background:#444;"></div>
<div class="a " style="left:845px;top:162px;width:1px;height:2px;background:#444;"></div>
<div class="a " style="left:854px;top:162px;width:1px;height:2px;background:#444;"></div>
<div class="a " style="left:864px;top:161px;width:1px;height:5px;background:#444;"></div>
<div class="a " style="left:874px;top:162px;width:1px;height:2px;background:#444;"></div>
<div class="a " style="left:883px;top:162px;width:1px;height:2px;background:#444;"></div>
<div class="a " style="left:893px;top:162px;width:1px;height:2px;background:#444;"></div>
<span class="a" style="left:897.5px;top:158px;width:12px;font-size:9.5px;line-height:10px;color:#333;text-align:center;">4</span>
<div class="a " style="left:912px;top:162px;width:1px;height:2px;background:#444;"></div>
<div class="a " style="left:922px;top:162px;width:1px;height:2px;background:#444;"></div>
<div class="a " style="left:931px;top:162px;width:1px;height:2px;background:#444;"></div>
<div class="a " style="left:941px;top:161px;width:1px;height:5px;background:#444;"></div>
<div class="a " style="left:951px;top:162px;width:1px;height:2px;background:#444;"></div>
<div class="a " style="left:960px;top:162px;width:1px;height:2px;background:#444;"></div>
<div class="a " style="left:970px;top:162px;width:1px;height:2px;background:#444;"></div>
<span class="a" style="left:974.5px;top:158px;width:12px;font-size:9.5px;line-height:10px;color:#333;text-align:center;">5</span>
<div class="a " style="left:989px;top:162px;width:1px;height:2px;background:#444;"></div>
<div class="a " style="left:999px;top:162px;width:1px;height:2px;background:#444;"></div>
<div class="a " style="left:1008px;top:162px;width:1px;height:2px;background:#444;"></div>
<div class="a " style="left:1037px;top:162px;width:1px;height:2px;background:#444;"></div>
<div class="a " style="left:1047px;top:162px;width:1px;height:2px;background:#444;"></div>
<span class="a" style="left:1051.5px;top:158px;width:12px;font-size:9.5px;line-height:10px;color:#333;text-align:center;">6</span>
<div class="a " style="left:1066px;top:162px;width:1px;height:2px;background:#444;"></div>
<div class="a " style="left:1076px;top:162px;width:1px;height:2px;background:#444;"></div>
<div class="a " style="left:1085px;top:162px;width:1px;height:2px;background:#444;"></div>
<div class="a " style="left:1095px;top:161px;width:1px;height:5px;background:#444;"></div>
<div class="a " style="left:1105px;top:162px;width:1px;height:2px;background:#444;"></div>
<div class="a " style="left:1114px;top:162px;width:1px;height:2px;background:#444;"></div>
<div class="a " style="left:1124px;top:162px;width:1px;height:2px;background:#444;"></div>
<span class="a" style="left:1128.5px;top:158px;width:12px;font-size:9.5px;line-height:10px;color:#333;text-align:center;">7</span>
<svg class="a" style="left:585px;top:158px;opacity:.9;" width="8" height="8" viewBox="0 0 8 8"><path d="M0 1.5H8M0 3.5H8M0 5.5H8M0 7.5H8M1.5 0V8M3.5 0V8M5.5 0V8M7.5 0V8" stroke="#777" stroke-width="0.8" fill="none"/></svg>
<svg class="a" style="left:810px;top:158px;opacity:.9;" width="8" height="8" viewBox="0 0 8 8"><path d="M0 1.5H8M0 3.5H8M0 5.5H8M0 7.5H8M1.5 0V8M3.5 0V8M5.5 0V8M7.5 0V8" stroke="#777" stroke-width="0.8" fill="none"/></svg>
<svg class="a" style="left:1022px;top:158px;opacity:.9;" width="8" height="8" viewBox="0 0 8 8"><path d="M0 1.5H8M0 3.5H8M0 5.5H8M0 7.5H8M1.5 0V8M3.5 0V8M5.5 0V8M7.5 0V8" stroke="#777" stroke-width="0.8" fill="none"/></svg>
<div class="a " style="left:483px;top:176px;width:652px;height:530px;background:#fff;"></div>
<div class="a " style="left:590px;top:176px;width:4px;height:1px;background:#222;"></div>
<div class="a " style="left:707px;top:176px;width:2px;height:1px;background:#666;"></div>
<div class="a " style="left:713px;top:176px;width:1px;height:1px;background:#888;"></div>
<div class="a " style="left:767px;top:176px;width:2px;height:1px;background:#666;"></div>
<div class="a " style="left:846px;top:176px;width:1px;height:1px;background:#666;"></div>
<div class="a " style="left:904px;top:176px;width:1px;height:1px;background:#777;"></div>
<span class="a" id="t96" style="left:578.00px;top:178.00px;font-size:12.6px;line-height:12.6px;color:#000;letter-spacing:-0.469px;">required information has been entered, you will be able to select <b>Update.</b></span>
<div class="a " style="left:574px;top:191px;width:13px;height:13px;background:#fff;border:1px solid #9a9a9a;"></div>
<svg class="a" style="left:576px;top:193px;" width="9" height="9" viewBox="0 0 9 9"><path d="M4.5 1V8M1 4.5H8" fill="none" stroke="#555" stroke-width="1"/><path d="M4.5 0L6.2 2.2H2.8ZM4.5 9L6.2 6.8H2.8ZM0 4.5L2.2 2.8V6.2ZM9 4.5L6.8 2.8V6.2Z" fill="#555"/></svg>
<div class="a " style="left:589px;top:204px;width:439px;height:473px;background:#fff;border:1px solid #000;"></div>
<div class="a " style="left:590px;top:205px;width:437px;height:19px;background:#243f60;"></div>
<div class="a " style="left:589px;top:224px;width:439px;height:1px;background:#000;"></div>
<div class="a " style="left:815px;top:204px;width:1px;height:421px;background:#000;"></div>
<div class="a " style="left:589px;top:476px;width:439px;height:1px;background:#000;"></div>
<div class="a " style="left:589px;top:624px;width:439px;height:1px;background:#000;"></div>
<span class="a" id="t97" style="left:684.50px;top:207.00px;font-size:12.6px;line-height:12.6px;color:#fff;letter-spacing:-0.635px;">Groups</span>
<span class="a" id="t98" style="left:885.50px;top:207.00px;font-size:12.6px;line-height:12.6px;color:#fff;letter-spacing:-0.484px;">Virtual Groups</span>
<div class="a " style="left:1029px;top:677px;width:8px;height:8px;background:#fff;border:1px solid #909090;"></div>
<span class="a" id="t99" style="left:596.00px;top:479.00px;font-size:12.0px;line-height:12.0px;color:#000;font-weight:bold;letter-spacing:-0.213px;">Can update:</span>
<div class="a " style="left:616.0px;top:496.4px;width:4.6px;height:4.6px;background:#000;border-radius:50%;"></div>
<span class="a" id="t100" style="left:634.75px;top:493.00px;font-size:12.0px;line-height:12.0px;color:#000;letter-spacing:-0.244px;">Organization name</span>
<div class="a " style="left:616.0px;top:510.4px;width:4.6px;height:4.6px;background:#000;border-radius:50%;"></div>
<span class="a" id="t101" style="left:634.75px;top:507.00px;font-size:12.0px;line-height:12.0px;color:#000;letter-spacing:-0.254px;">Address</span>
<div class="a " style="left:616.0px;top:524.4px;width:4.6px;height:4.6px;background:#000;border-radius:50%;"></div>
<span class="a" id="t102" style="left:634.75px;top:521.00px;font-size:12.0px;line-height:12.0px;color:#000;letter-spacing:-0.355px;">City</span>
<div class="a " style="left:616.0px;top:539.4px;width:4.6px;height:4.6px;background:#000;border-radius:50%;"></div>
<span class="a" id="t103" style="left:634.75px;top:536.00px;font-size:12.0px;line-height:12.0px;color:#000;letter-spacing:-0.256px;">State</span>
<div class="a " style="left:616.0px;top:553.4px;width:4.6px;height:4.6px;background:#000;border-radius:50%;"></div>
<span class="a" id="t104" style="left:634.75px;top:550.00px;font-size:12.0px;line-height:12.0px;color:#000;letter-spacing:-0.279px;">Zipcode</span>
<span class="a" id="t105" style="left:596.00px;top:577.00px;font-size:12.0px;line-height:12.0px;color:#000;font-weight:bold;letter-spacing:-0.206px;">Can’t update:</span>
<div class="a " style="left:616.0px;top:595.4px;width:4.6px;height:4.6px;background:#000;border-radius:50%;"></div>
<span class="a" id="t106" style="left:634.75px;top:592.00px;font-size:12.0px;line-height:12.0px;color:#000;letter-spacing:-0.223px;">Group size*</span>
<div class="a " style="left:616.0px;top:609.4px;width:4.6px;height:4.6px;background:#000;border-radius:50%;"></div>
<span class="a" id="t107" style="left:634.75px;top:606.00px;font-size:12.0px;line-height:12.0px;color:#000;letter-spacing:-0.184px;">TIN**</span>
<span class="a" id="t108" style="left:822.00px;top:479.00px;font-size:12.0px;line-height:12.0px;color:#000;font-weight:bold;letter-spacing:-0.213px;">Can update:</span>
<div class="a " style="left:842.4px;top:496.4px;width:4.6px;height:4.6px;background:#000;border-radius:50%;"></div>
<span class="a" id="t109" style="left:860.50px;top:493.00px;font-size:12.0px;line-height:12.0px;color:#000;letter-spacing:-0.219px;">Address</span>
<div class="a " style="left:842.4px;top:510.4px;width:4.6px;height:4.6px;background:#000;border-radius:50%;"></div>
<span class="a" id="t110" style="left:860.50px;top:507.00px;font-size:12.0px;line-height:12.0px;color:#000;letter-spacing:-0.293px;">City</span>
<div class="a " style="left:842.4px;top:524.4px;width:4.6px;height:4.6px;background:#000;border-radius:50%;"></div>
<span class="a" id="t111" style="left:860.50px;top:521.00px;font-size:12.0px;line-height:12.0px;color:#000;letter-spacing:-0.206px;">State</span>
<div class="a " style="left:842.4px;top:538.4px;width:4.6px;height:4.6px;background:#000;border-radius:50%;"></div>
<span class="a" id="t112" style="left:860.50px;top:535.00px;font-size:12.0px;line-height:12.0px;color:#000;letter-spacing:-0.243px;">Zipcode</span>
<span class="a" id="t113" style="left:822.00px;top:563.00px;font-size:12.0px;line-height:12.0px;color:#000;font-weight:bold;letter-spacing:-0.206px;">Can’t update:</span>
<div class="a " style="left:842.4px;top:580.4px;width:4.6px;height:4.6px;background:#000;border-radius:50%;"></div>
<span class="a" id="t114" style="left:860.50px;top:577.00px;font-size:12.0px;line-height:12.0px;color:#000;letter-spacing:-0.229px;">Organization name</span>
<div class="a " style="left:842.4px;top:595.4px;width:4.6px;height:4.6px;background:#000;border-radius:50%;"></div>
<span class="a" id="t115" style="left:860.50px;top:592.00px;font-size:12.0px;line-height:12.0px;color:#000;letter-spacing:-0.200px;">Group size*</span>
<div class="a " style="left:842.4px;top:609.4px;width:4.6px;height:4.6px;background:#000;border-radius:50%;"></div>
<span class="a" id="t116" style="left:860.50px;top:606.00px;font-size:12.0px;line-height:12.0px;color:#000;letter-spacing:-0.167px;">Virtual group ID**</span>
<span class="a" id="t117" style="left:596.00px;top:633.00px;font-size:12.0px;line-height:12.0px;color:#000;letter-spacing:-0.115px;">*<b>Group size</b> can only be edited on the main registration page.</span>
<span class="a" id="t118" style="left:596.00px;top:653.00px;font-size:12.0px;line-height:12.0px;color:#000;letter-spacing:-0.111px;">**<b>TIN</b> and <b>virtual group ID</b> cannot be edited at all.</span>
<div class="a" style="left:596px;top:231px;width:209px;height:92px;background:linear-gradient(90deg,#0f4a8a,#1d5ea6);"></div>
<div class="a " style="left:603px;top:237.5px;width:196px;height:220px;background:#fff;border-radius:3px;box-shadow:0 0 2px rgba(0,0,0,.25);"></div>
<span class="a" id="t119" style="left:616.50px;top:252.00px;font-size:11.2px;line-height:11.2px;color:#222;letter-spacing:-0.063px;">Organization Information</span>
<span class="a" id="t120" style="left:616.50px;top:266.00px;font-size:5.4px;line-height:5.4px;color:#333;letter-spacing:0.018px;">Edit your organization name and address.</span>
<div class="a " style="left:616px;top:282px;width:170px;height:17px;background:#fff;border:1px solid #e4e4e4;"></div>
<span class="a" id="t121" style="left:621.50px;top:286.00px;font-size:4.7px;line-height:4.7px;color:#555;">Organization Name*</span>
<span class="a" id="t122" style="left:621.50px;top:291.00px;font-size:5.2px;line-height:5.2px;color:#111;font-weight:bold;">Sample Organization</span>
<svg class="a" style="left:775px;top:288.0px;" width="6" height="5" viewBox="0 0 6 5"><path d="M0.6 2.6L2.3 4.2L5.4 0.7" fill="none" stroke="#6cb33f" stroke-width="1"/></svg>
<div class="a " style="left:616px;top:305px;width:170px;height:16.5px;background:#fff;border:1px solid #e4e4e4;"></div>
<span class="a" id="t123" style="left:621.50px;top:309.00px;font-size:4.7px;line-height:4.7px;color:#555;">Address*</span>
<span class="a" id="t124" style="left:621.50px;top:314.00px;font-size:5.2px;line-height:5.2px;color:#111;font-weight:bold;">543 test ave</span>
<svg class="a" style="left:775px;top:310.75px;" width="6" height="5" viewBox="0 0 6 5"><path d="M0.6 2.6L2.3 4.2L5.4 0.7" fill="none" stroke="#6cb33f" stroke-width="1"/></svg>
<div class="a " style="left:616px;top:327.5px;width:170px;height:16.5px;background:#fff;border:1px solid #e4e4e4;"></div>
<span class="a" id="t125" style="left:621.50px;top:331.00px;font-size:4.7px;line-height:4.7px;color:#555;">Address 2</span>
<span class="a" id="t126" style="left:621.50px;top:336.00px;font-size:5.2px;line-height:5.2px;color:#111;font-weight:bold;">suite 300</span>
<svg class="a" style="left:775px;top:333.25px;" width="6" height="5" viewBox="0 0 6 5"><path d="M0.6 2.6L2.3 4.2L5.4 0.7" fill="none" stroke="#6cb33f" stroke-width="1"/></svg>
<div class="a " style="left:616px;top:350.5px;width:54.5px;height:16px;background:#fff;border:1px solid #e4e4e4;"></div>
<span class="a" id="t127" style="left:621.50px;top:354.00px;font-size:4.7px;line-height:4.7px;color:#555;">City*</span>
<span class="a" id="t128" style="left:621.50px;top:359.00px;font-size:5.2px;line-height:5.2px;color:#111;font-weight:bold;">test</span>
<svg class="a" style="left:659.5px;top:356.0px;" width="6" height="5" viewBox="0 0 6 5"><path d="M0.6 2.6L2.3 4.2L5.4 0.7" fill="none" stroke="#6cb33f" stroke-width="1"/></svg>
<div class="a " style="left:674px;top:350.5px;width:54.5px;height:16px;background:#fff;border:1px solid #e4e4e4;"></div>
<span class="a" id="t129" style="left:679.50px;top:354.00px;font-size:4.7px;line-height:4.7px;color:#555;">State*</span>
<span class="a" id="t130" style="left:679.50px;top:359.00px;font-size:5.2px;line-height:5.2px;color:#111;font-weight:bold;">NC</span>
<svg class="a" style="left:717.5px;top:356.0px;" width="6" height="5" viewBox="0 0 6 5"><path d="M0.6 2.6L2.3 4.2L5.4 0.7" fill="none" stroke="#6cb33f" stroke-width="1"/></svg>
<div class="a " style="left:731.5px;top:350.5px;width:54.5px;height:16px;background:#fff;border:1px solid #e4e4e4;"></div>
<span class="a" id="t131" style="left:737.00px;top:354.00px;font-size:4.7px;line-height:4.7px;color:#555;">Zip Code*</span>
<span class="a" id="t132" style="left:737.00px;top:359.00px;font-size:5.2px;line-height:5.2px;color:#111;font-weight:bold;">27712</span>
<svg class="a" style="left:775.0px;top:356.0px;" width="6" height="5" viewBox="0 0 6 5"><path d="M0.6 2.6L2.3 4.2L5.4 0.7" fill="none" stroke="#6cb33f" stroke-width="1"/></svg>
<span class="a" id="t133" style="left:616.50px;top:376.00px;font-size:3.7px;line-height:3.7px;color:#333;">GROUP SIZE</span>
<span class="a" id="t134" style="left:616.50px;top:380.00px;font-size:5.2px;line-height:5.2px;color:#111;font-weight:bold;">25-99</span>
<span class="a" id="t135" style="left:684.20px;top:376.00px;font-size:3.7px;line-height:3.7px;color:#333;">TIN</span>
<span class="a" id="t136" style="left:684.20px;top:380.00px;font-size:5.2px;line-height:5.2px;color:#111;font-weight:bold;">00-0765432</span>
<span class="a" id="t137" style="left:616.50px;top:399.00px;font-size:4.8px;line-height:4.8px;color:#333;">* Required</span>
<div class="a " style="left:616px;top:414px;width:170px;height:17px;background:#0a64c2;border-radius:9px;"></div>
<span class="a" id="t138" style="left:692.00px;top:421.00px;font-size:4.4px;line-height:4.4px;color:#fff;font-weight:bold;">UPDATE</span>
<span class="a" id="t139" style="left:692.00px;top:439.00px;font-size:4.4px;line-height:4.4px;color:#0a64c2;font-weight:bold;">CANCEL</span>
<div class="a" style="left:820px;top:229px;width:200px;height:98px;background:linear-gradient(90deg,#0f4a8a,#1d5ea6);"></div>
<div class="a " style="left:826px;top:234.5px;width:189px;height:213.5px;background:#fff;border-radius:3px;box-shadow:0 0 2px rgba(0,0,0,.25);"></div>
<span class="a" id="t140" style="left:840.20px;top:245.00px;font-size:10.8px;line-height:10.8px;color:#555;letter-spacing:-0.060px;">Organization Information</span>
<span class="a" id="t141" style="left:840.20px;top:258.00px;font-size:4.9px;line-height:4.9px;color:#777;letter-spacing:0.077px;">Edit your organization address.</span>
<span class="a" id="t142" style="left:840.20px;top:275.00px;font-size:3.9px;line-height:3.9px;color:#b0b0b0;">ORGANIZATION NAME</span>
<span class="a" id="t143" style="left:840.20px;top:282.00px;font-size:4.8px;line-height:4.8px;color:#333;font-weight:bold;">Virtual Group</span>
<div class="a " style="left:840px;top:294px;width:161px;height:18px;background:#fff;border:1px solid #ececec;"></div>
<span class="a" id="t144" style="left:845.50px;top:298.00px;font-size:4.7px;line-height:4.7px;color:#bdbdbd;">Address*</span>
<span class="a" id="t145" style="left:845.50px;top:304.00px;font-size:5.2px;line-height:5.2px;color:#333;font-weight:bold;">530 Penn St. NE</span>
<svg class="a" style="left:990px;top:300.5px;" width="6" height="5" viewBox="0 0 6 5"><path d="M0.6 2.6L2.3 4.2L5.4 0.7" fill="none" stroke="#6cb33f" stroke-width="1"/></svg>
<div class="a " style="left:840px;top:317px;width:161px;height:18px;background:#fff;border:1px solid #ececec;"></div>
<span class="a" id="t146" style="left:845.50px;top:321.00px;font-size:4.7px;line-height:4.7px;color:#bdbdbd;">Address 2</span>
<div class="a " style="left:840px;top:340.5px;width:51.5px;height:17px;background:#fff;border:1px solid #ececec;"></div>
<span class="a" id="t147" style="left:845.50px;top:344.00px;font-size:4.7px;line-height:4.7px;color:#bdbdbd;">City*</span>
<span class="a" id="t148" style="left:845.50px;top:350.00px;font-size:5.2px;line-height:5.2px;color:#333;font-weight:bold;">Baltimore</span>
<svg class="a" style="left:880.5px;top:346.5px;" width="6" height="5" viewBox="0 0 6 5"><path d="M0.6 2.6L2.3 4.2L5.4 0.7" fill="none" stroke="#6cb33f" stroke-width="1"/></svg>
<div class="a " style="left:895px;top:340.5px;width:51.5px;height:17px;background:#fff;border:1px solid #ececec;"></div>
<span class="a" id="t149" style="left:900.50px;top:344.00px;font-size:4.7px;line-height:4.7px;color:#bdbdbd;">State*</span>
<span class="a" id="t150" style="left:900.50px;top:350.00px;font-size:5.2px;line-height:5.2px;color:#333;font-weight:bold;">Maryland</span>
<svg class="a" style="left:937.5px;top:347.5px;" width="4" height="3" viewBox="0 0 4 3"><path d="M0.3 0.5L2 2.2L3.7 0.5" fill="none" stroke="#4a78b8" stroke-width="0.8"/></svg>
<div class="a " style="left:949px;top:340.5px;width:52px;height:17px;background:#fff;border:1px solid #ececec;"></div>
<span class="a" id="t151" style="left:954.50px;top:344.00px;font-size:4.7px;line-height:4.7px;color:#bdbdbd;">Zip Code*</span>
<span class="a" id="t152" style="left:954.50px;top:350.00px;font-size:5.2px;line-height:5.2px;color:#333;font-weight:bold;">20002</span>
<svg class="a" style="left:990px;top:346.5px;" width="6" height="5" viewBox="0 0 6 5"><path d="M0.6 2.6L2.3 4.2L5.4 0.7" fill="none" stroke="#6cb33f" stroke-width="1"/></svg>
<span class="a" id="t153" style="left:840.20px;top:367.00px;font-size:3.8px;line-height:3.8px;color:#b0b0b0;">GROUP SIZE</span>
<span class="a" id="t154" style="left:840.20px;top:374.00px;font-size:4.8px;line-height:4.8px;color:#333;font-weight:bold;">25-99</span>
<span class="a" id="t155" style="left:895.30px;top:367.00px;font-size:3.8px;line-height:3.8px;color:#b0b0b0;">VIRTUAL GROUP ID</span>
<span class="a" id="t156" style="left:895.30px;top:374.00px;font-size:4.8px;line-height:4.8px;color:#333;font-weight:bold;">X12345</span>
<span class="a" id="t157" style="left:840.20px;top:391.00px;font-size:4.8px;line-height:4.8px;color:#999;">* Required</span>
<div class="a " style="left:840px;top:405px;width:161px;height:16.5px;background:#0a64c2;border-radius:9px;"></div>
<span class="a" id="t158" style="left:912.50px;top:412.00px;font-size:4px;line-height:4px;color:#dfeafc;font-weight:bold;">UPDATE</span>
<span class="a" id="t159" style="left:912.00px;top:431.00px;font-size:4px;line-height:4px;color:#0a64c2;font-weight:bold;">CANCEL</span>
<!-- s_status -->
<div class="a " style="left:0px;top:706px;width:1366px;height:22px;background:#f1f1f1;"></div>
<div class="a " style="left:0px;top:706px;width:1366px;height:1px;background:#c8c8c8;"></div>
<div class="a " style="left:0px;top:727px;width:1366px;height:1px;background:#fff;"></div>
<span class="a" id="t160" style="left:8.50px;top:710.00px;font-size:12px;line-height:12px;color:#555;letter-spacing:-0.480px;">Page 17 of 30</span>
<span class="a" id="t161" style="left:96.00px;top:710.00px;font-size:12px;line-height:12px;color:#555;letter-spacing:-0.305px;">4163 words</span>
<svg class="a" style="left:174px;top:710px;" width="15" height="13" viewBox="0 0 15 13"><path d="M6.5 2.4Q6 0.6 4.5 0.5H0.5V10.5H4.5Q6 10.5 6.5 11.5" fill="none" stroke="#666" stroke-width="1"/><path d="M6.5 2.4V12.6M5.2 11.3L6.5 12.8L7.8 11.3" fill="none" stroke="#666" stroke-width="1"/><path d="M6.5 2.4Q7 0.6 8.5 0.5H12.5V2M12.5 9V10.5H8.5Q7 10.5 6.5 11.5" fill="none" stroke="#666" stroke-width="1"/><path d="M9.3 3.2L13.9 8.7M13.9 3.2L9.3 8.7" stroke="#555" stroke-width="1.5"/></svg>
<div class="a " style="left:1112px;top:707px;width:38px;height:21px;background:#c6c6c6;"></div>
<svg class="a" style="left:1086px;top:710px;" width="14" height="13" viewBox="0 0 14 13"><path d="M0.5 0.5H13.5V10.5H0.5Z" fill="none" stroke="#666" stroke-width="1"/><path d="M6.8 0.5V12.4M5.4 11L6.8 12.6L8.2 11" fill="none" stroke="#666" stroke-width="1.1"/><path d="M2 2.5H5.4M2 4.5H5.4M2 6.5H5.4M2 8.5H5.4M8.2 2.5H12M8.2 4.5H12M8.2 6.5H12M8.2 8.5H12" fill="none" stroke="#666" stroke-width="1"/></svg>
<svg class="a" style="left:1124px;top:710px;" width="14" height="13" viewBox="0 0 14 13"><rect x="0.5" y="0.5" width="13" height="12" fill="none" stroke="#555" stroke-width="1"/><path d="M2 2.5H12M2 4.5H12M2 6.5H12M2 8.5H12M2 10.5H12" stroke="#555" stroke-width="1"/></svg>
<svg class="a" style="left:1162px;top:710px;" width="15" height="14" viewBox="0 0 15 14"><path d="M7 10.5H0.5V0.5H11.5V5" fill="none" stroke="#666" stroke-width="1"/><path d="M2.5 2.5H9.5M2.5 4.5H9.5M2.5 6.5H6.5M2.5 8.5H5.5" stroke="#666" stroke-width="1"/><circle cx="10.4" cy="9.2" r="3.9" fill="#6a6a6a" stroke="#f1f1f1" stroke-width="0.8"/><path d="M8.2 7.2Q9.6 6.4 10.4 7.4Q10 8.6 8.8 8.8Q7.8 8.4 8.2 7.2ZM11 9.6Q12.4 9 12.8 10.2Q12.2 11.8 11 11.6Q10.4 10.6 11 9.6Z" fill="#dcdcdc"/></svg>
<div class="a " style="left:1193px;top:716px;width:6px;height:1.5px;background:#555;"></div>
<div class="a " style="left:1203px;top:716px;width:100px;height:1px;background:#9a9a9a;"></div>
<div class="a " style="left:1254px;top:713px;width:1px;height:7px;background:#9a9a9a;"></div>
<div class="a " style="left:1241px;top:711px;width:4px;height:11px;background:#666;"></div>
<div class="a " style="left:1307px;top:716px;width:8px;height:1.5px;background:#555;"></div>
<div class="a " style="left:1310.25px;top:712.75px;width:1.5px;height:8px;background:#555;"></div>
<span class="a" id="t162" style="left:1331.00px;top:710.00px;font-size:12px;line-height:12px;color:#555;transform:scaleX(0.8572);transform-origin:0 0;">80%</span>
<!-- s_task -->
<div class="a " style="left:0px;top:728px;width:1366px;height:40px;background:#080a11;"></div>
<svg class="a" style="left:16px;top:740px;" width="16" height="16" viewBox="0 0 16 16"><path d="M0 2.3L6.6 1.4V7.6H0Z M7.4 1.3L16 0V7.6H7.4Z M0 8.4H6.6V14.6L0 13.7Z M7.4 8.4H16V16L7.4 14.7Z" fill="#fff"/></svg>
<svg class="a" style="left:64px;top:740px;" width="17" height="17" viewBox="0 0 17 17"><circle cx="10.6" cy="6.2" r="5" fill="none" stroke="#fff" stroke-width="1.3"/><path d="M7.2 9.8L0.8 16.2" stroke="#fff" stroke-width="1.4"/></svg>
<svg class="a" style="left:110px;top:741px;" width="21" height="14" viewBox="0 0 21 14"><rect x="4.5" y="0.7" width="12" height="12.6" fill="none" stroke="#fff" stroke-width="1.3"/><path d="M2.6 2.6H0.7V11.4H2.6M18.4 2.6H20.3V11.4H18.4" fill="none" stroke="#fff" stroke-width="1.2"/></svg>
<svg class="a" style="left:160px;top:737.5px;" width="21" height="21" viewBox="0 0 21 21"><path d="M0.8 9.2C1.6 3.6 5.6 0.4 10.6 0.4C16.4 0.4 20.2 4.6 20.2 10.2V12.4H6.8C7 15 9.2 16.6 12.4 16.6C14.8 16.6 17 15.9 18.8 14.8V19C16.8 20.1 14.4 20.7 11.6 20.7C5.6 20.7 1.6 17 1.6 11.4C1.6 7.8 3.6 5 6.4 3.6C4 4.6 2 6.6 0.8 9.2Z M6.9 8.6H14.2C14.1 6.2 12.8 4.7 10.6 4.7C8.6 4.7 7.2 6.2 6.9 8.6Z" fill="#0f7fdc" fill-rule="evenodd"/></svg>
<svg class="a" style="left:207px;top:739px;" width="23" height="18" viewBox="0 0 23 18"><path d="M0.5 1.2Q0.5 0.4 1.3 0.4H8.4L10 2H21.4Q22.2 2 22.2 2.8V6H0.5Z" fill="#f2c24c"/><rect x="1.6" y="1.4" width="3" height="0.9" fill="#f9e7a6"/><rect x="0.5" y="3.4" width="21.8" height="13.8" rx="0.6" fill="#fbe391"/><path d="M5 17.2V10.2H17.8V17.2H14.8V13H8V17.2Z" fill="#38a3ee"/><path d="M5 10.2H17.8V11.6H5Z" fill="#2a8fdf"/></svg>
<svg class="a" style="left:255px;top:736.5px;" width="22" height="22" viewBox="0 0 22 22"><circle cx="11" cy="11" r="11" fill="#4caf50"/><path d="M11 11L1.47 5.5A11 11 0 0 1 20.53 5.5Z" fill="#e53935"/><path d="M11 11L20.53 5.5A11 11 0 0 1 11 22Z" fill="#fdd835"/><path d="M11 11L11 22A11 11 0 0 1 1.47 5.5Z" fill="#43a047"/><path d="M11 0A11 11 0 0 1 20.53 5.5H11Z" fill="#e53935"/><circle cx="11" cy="11" r="5" fill="#fff"/><circle cx="11" cy="11" r="4" fill="#4285f4"/></svg>
<svg class="a" style="left:300px;top:736px;" width="23" height="23" viewBox="0 0 23 23"><clipPath id="wbc"><circle cx="11.2" cy="11.2" r="11"/></clipPath><circle cx="11.2" cy="11.2" r="11" fill="#1d97d6"/><circle cx="14.4" cy="14.6" r="11.6" fill="#2b7f2e" clip-path="url(#wbc)"/><ellipse cx="10.4" cy="10.6" rx="8.6" ry="5.9" transform="rotate(-58 10.4 10.6)" fill="#f6fbfe"/><path d="M4.6 10.5C6.4 13 9 14.4 12 14.6C10.6 17 8.2 18.4 6.2 17.8C4.4 16.2 3.8 13.2 4.6 10.5Z" fill="#b9def3"/><rect x="14.2" y="14.4" width="8.6" height="8.4" fill="#4a4a4a" stroke="#9a9a9a" stroke-width="0.8"/><path d="M15.8 16.4H21.2M16 17.6V19.4M17.8 17.6V19.4M19.6 17.6V19.4M21 17.6V19.4" stroke="#a8a8a8" stroke-width="0.8"/></svg>
<span class="a" id="t163" style="left:328.00px;top:741.00px;font-size:13px;line-height:13px;color:#fff;transform:scaleX(0.8735);transform-origin:0 0;">WebEx Assistant</span>
<div class="a " style="left:294px;top:766px;width:138px;height:2px;background:#76b9ed;"></div>
<svg class="a" style="left:448px;top:736px;" width="26" height="26" viewBox="0 0 26 26"><rect x="9" y="5.5" width="13" height="10" fill="#fff"/><path d="M13.5 8L16 10.6L20.4 6.4" fill="none" stroke="#0a6ccf" stroke-width="1.8"/><path d="M0 2.2L13.4 0V21.6L0 19.4Z" fill="#0a6ccf"/><ellipse cx="6.9" cy="10.8" rx="3" ry="3.8" fill="none" stroke="#fff" stroke-width="1.9"/><rect x="10.5" y="14.5" width="15" height="11" fill="#f0b35a"/><path d="M10.5 14.5L18 21L25.5 14.5" fill="none" stroke="#fbe3b8" stroke-width="1"/></svg>
<span class="a" id="t164" style="left:475.50px;top:741.00px;font-size:13px;line-height:13px;color:#fff;letter-spacing:-0.570px;">Inbox - LisaMari...</span>
<div class="a " style="left:441px;top:766px;width:138.5px;height:2px;background:#76b9ed;"></div>
<div class="a " style="left:583px;top:728px;width:146px;height:40px;background:#9a541e;"></div>
<div class="a " style="left:583px;top:766px;width:146px;height:2px;background:#f7630c;"></div>
<svg class="a" style="left:596px;top:737px;" width="19" height="21" viewBox="0 0 19 21"><path d="M9.5 0.8C13.4 0.8 15.2 4 15.4 8C15.6 12.4 17 14.2 18.6 15.6V16.8H0.4V15.6C2 14.2 3.4 12.4 3.6 8C3.8 4 5.6 0.8 9.5 0.8Z" fill="#f5cc84"/><path d="M6.8 18H12.2A2.7 2.7 0 0 1 6.8 18Z" fill="#f5cc84"/><path d="M3 12.4Q9.5 14.6 16 12.4" fill="none" stroke="#d4a258" stroke-width="0.9"/></svg>
<span class="a" id="t165" style="left:621.00px;top:741.00px;font-size:13px;line-height:13px;color:#f4f0ec;transform:scaleX(0.8833);transform-origin:0 0;">8 Reminder(s)</span>
<svg class="a" style="left:740.5px;top:736.5px;" width="23" height="23" viewBox="0 0 16 16"><path d="M7 1.5H15.5V14.5H7Z" fill="#fff" stroke="#2b579a" stroke-width="1"/><path d="M10.5 4.5H14M10.5 6.5H14M10.5 8.5H14M10.5 10.5H14M10.5 12.3H14" stroke="#2b579a" stroke-width="0.9"/><path d="M0 1.6L9.6 0V16L0 14.4Z" fill="#2b579a"/><path d="M1.9 5.2L3.2 10.8L4.7 5.6L6.2 10.8L7.6 5.2" fill="none" stroke="#fff" stroke-width="1.1"/></svg>
<span class="a" id="t166" style="left:768.75px;top:741.00px;font-size:13px;line-height:13px;color:#fff;transform:scaleX(0.8913);transform-origin:0 0;">Appendix D CAH...</span>
<div class="a " style="left:734px;top:766px;width:138.5px;height:2px;background:#76b9ed;"></div>
<div class="a " style="left:876px;top:728px;width:146px;height:40px;background:#45474b;"></div>
<svg class="a" style="left:886.5px;top:736.5px;" width="23" height="23" viewBox="0 0 16 16"><path d="M7 1.5H15.5V14.5H7Z" fill="#fff" stroke="#2b579a" stroke-width="1"/><path d="M10.5 4.5H14M10.5 6.5H14M10.5 8.5H14M10.5 10.5H14M10.5 12.3H14" stroke="#2b579a" stroke-width="0.9"/><path d="M0 1.6L9.6 0V16L0 14.4Z" fill="#2b579a"/><path d="M1.9 5.2L3.2 10.8L4.7 5.6L6.2 10.8L7.6 5.2" fill="none" stroke="#fff" stroke-width="1.1"/></svg>
<span class="a" id="t167" style="left:913.75px;top:741.00px;font-size:13px;line-height:13px;color:#fff;transform:scaleX(0.8571);transform-origin:0 0;">2019 CAHPS and...</span>
<div class="a " style="left:876px;top:766px;width:146px;height:2px;background:#76b9ed;"></div>
<svg class="a" style="left:1033px;top:736.5px;" width="23" height="23" viewBox="0 0 16 16"><path d="M7 1.5H15.5V14.5H7Z" fill="#fff" stroke="#2b579a" stroke-width="1"/><path d="M10.5 4.5H14M10.5 6.5H14M10.5 8.5H14M10.5 10.5H14M10.5 12.3H14" stroke="#2b579a" stroke-width="0.9"/><path d="M0 1.6L9.6 0V16L0 14.4Z" fill="#2b579a"/><path d="M1.9 5.2L3.2 10.8L4.7 5.6L6.2 10.8L7.6 5.2" fill="none" stroke="#fff" stroke-width="1.1"/></svg>
<span class="a" id="t168" style="left:1060.00px;top:741.00px;font-size:13px;line-height:13px;color:#fff;transform:scaleX(0.8638);transform-origin:0 0;">2018 CAHPS for ...</span>
<div class="a " style="left:1026px;top:766px;width:138px;height:2px;background:#76b9ed;"></div>
<svg class="a" style="left:1177.5px;top:743.5px;" width="12" height="8" viewBox="0 0 12 8"><path d="M0.6 7L6 1.4L11.4 7" fill="none" stroke="#fff" stroke-width="1.3"/></svg>
<svg class="a" style="left:1199px;top:740px;" width="17" height="17" viewBox="0 0 17 17"><path d="M8 0.6A7 7 0 0 1 14.8 9.4A4.2 4.2 0 0 1 9.4 14.9A7 7 0 0 1 1.2 6.2A4.2 4.2 0 0 1 6.6 0.8A7 7 0 0 1 8 0.6Z" fill="#16a7e8"/><path d="M10.6 5.4C9.6 4.2 5.6 4 5.6 6.2C5.6 8.4 10.6 7.4 10.6 9.8C10.6 12 6.4 12 5.2 10.4" fill="none" stroke="#fff" stroke-width="1.5"/><circle cx="12.6" cy="12.6" r="3.4" fill="#e81123" stroke="#fff" stroke-width="0.6"/><path d="M11.2 11.2L14 14M14 11.2L11.2 14" stroke="#fff" stroke-width="0.9"/></svg>
<svg class="a" style="left:1223px;top:742px;" width="17" height="12" viewBox="0 0 17 12"><rect x="5.5" y="3.5" width="10" height="7" fill="none" stroke="#fff" stroke-width="1"/><rect x="15.5" y="5.5" width="1.4" height="3" fill="#fff"/><rect x="7" y="5" width="6" height="4" fill="#fff"/><path d="M1.5 0.3V2.2M4 0.3V2.2M0.6 2.4H4.9V4.4Q4.9 6 2.75 6Q0.6 6 0.6 4.4ZM2.75 6V9.5H5" fill="none" stroke="#fff" stroke-width="1"/></svg>
<svg class="a" style="left:1247px;top:742px;" width="17" height="15" viewBox="0 0 17 15"><rect x="3.5" y="0.5" width="13" height="9" fill="none" stroke="#fff" stroke-width="1"/><path d="M10 9.5V13M6.5 13.5H13.5" stroke="#fff" stroke-width="1"/><path d="M0.5 1.5H3.5V4.5L2 6L0.5 4.5ZM2 6V13.5H6.5" fill="#080a11" stroke="#fff" stroke-width="1"/></svg>
<svg class="a" style="left:1271px;top:742px;" width="15" height="12" viewBox="0 0 15 12"><path d="M0.6 4H3.2L6.6 0.8V11.2L3.2 8H0.6Z" fill="none" stroke="#fff" stroke-width="1"/><path d="M9.4 4L13.6 8.2M13.6 4L9.4 8.2" stroke="#fff" stroke-width="1"/></svg>
<span class="a" id="t169" style="left:1305.00px;top:733.00px;font-size:12.5px;line-height:12.5px;color:#fff;transform:scaleX(0.9020);transform-origin:0 0;">4:21 PM</span>
<span class="a" id="t170" style="left:1296.70px;top:750.00px;font-size:12.5px;line-height:12.5px;color:#fff;letter-spacing:-0.426px;">08/01/2019</span>
<div class="a " style="left:1361px;top:728px;width:1px;height:40px;background:#55585e;"></div>
</body>
</html>
